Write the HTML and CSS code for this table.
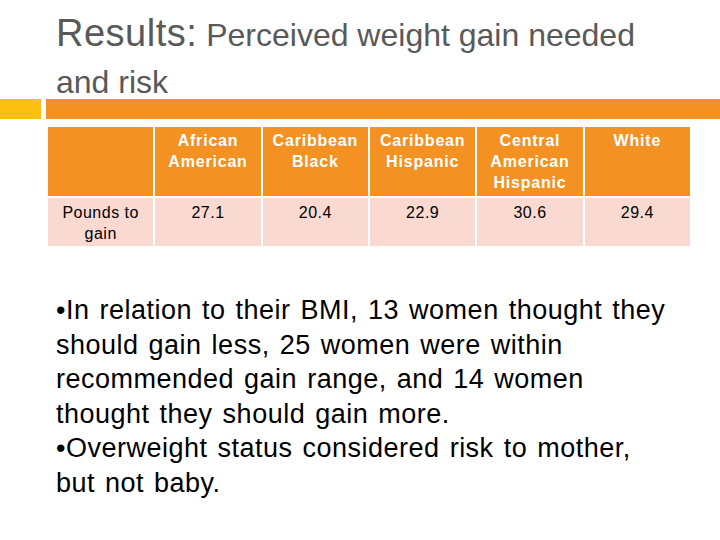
FILE: index.html
```html
<!DOCTYPE html>
<html lang="en">
<head>
<meta charset="utf-8">
<title>Results</title>
<link rel="stylesheet" href="styles.css">
</head>
<body>
<div class="slide">
  <h1 class="title"><span class="title-lead">Results:</span> Perceived weight gain needed<br>and risk</h1>
  <div class="rule">
    <div class="rule-accent"></div>
    <div class="rule-bar"></div>
  </div>
  <table class="data">
    <thead>
      <tr>
        <th></th>
        <th>African American</th>
        <th>Caribbean Black</th>
        <th>Caribbean Hispanic</th>
        <th>Central American Hispanic</th>
        <th>White</th>
      </tr>
    </thead>
    <tbody>
      <tr>
        <td>Pounds to gain</td>
        <td>27.1</td>
        <td>20.4</td>
        <td>22.9</td>
        <td>30.6</td>
        <td>29.4</td>
      </tr>
    </tbody>
  </table>
  <div class="body-text">
    <p>•In relation to their BMI, 13 women thought they should gain less, 25 women were within recommended gain range, and 14 women thought they should gain more.</p>
    <p>•Overweight status considered risk to mother, but not baby.</p>
  </div>
</div>
</body>
</html>
```
FILE: styles.css
```css
html, body {
  margin: 0;
  padding: 0;
  background: #ffffff;
}

.slide {
  width: 720px;
  height: 540px;
  overflow: hidden;
  font-family: "Liberation Sans", Arial, sans-serif;
}

.title {
  margin: 0 0 -7px 0;
  padding: 12px 40px 0 56px;
  font-size: 32px;
  font-weight: normal;
  line-height: 47px;
  color: #595959;
}

.title-lead {
  font-size: 38px;
  line-height: 1;
  letter-spacing: 0.5px;
}

.rule {
  display: flex;
  gap: 5px;
  height: 20px;
}

.rule-accent {
  width: 41px;
  background: #fdc010;
}

.rule-bar {
  flex: 1;
  background: #f39122;
}

.data {
  margin: 6px 0 0 46px;
  width: 646px;
  table-layout: fixed;
  border-collapse: separate;
  border-spacing: 2px;
  font-size: 16px;
  line-height: 21px;
}

.data th,
.data td {
  padding: 3px 2px;
  text-align: center;
  vertical-align: top;
}

.data th {
  background: #f39122;
  color: #ffffff;
  font-weight: bold;
  letter-spacing: 0.8px;
  height: 63px;
}

.data td {
  padding-top: 4px;
  padding-bottom: 2px;
  background: #fadad0;
  color: #000000;
  letter-spacing: 0.5px;
  height: 42px;
}

.body-text {
  margin: 45px 0 0 56px;
  width: 616px;
  font-size: 27px;
  line-height: 34.6px;
  letter-spacing: 0.5px;
  word-spacing: 2px;
  color: #000000;
}

.body-text p {
  margin: 0;
}
```
